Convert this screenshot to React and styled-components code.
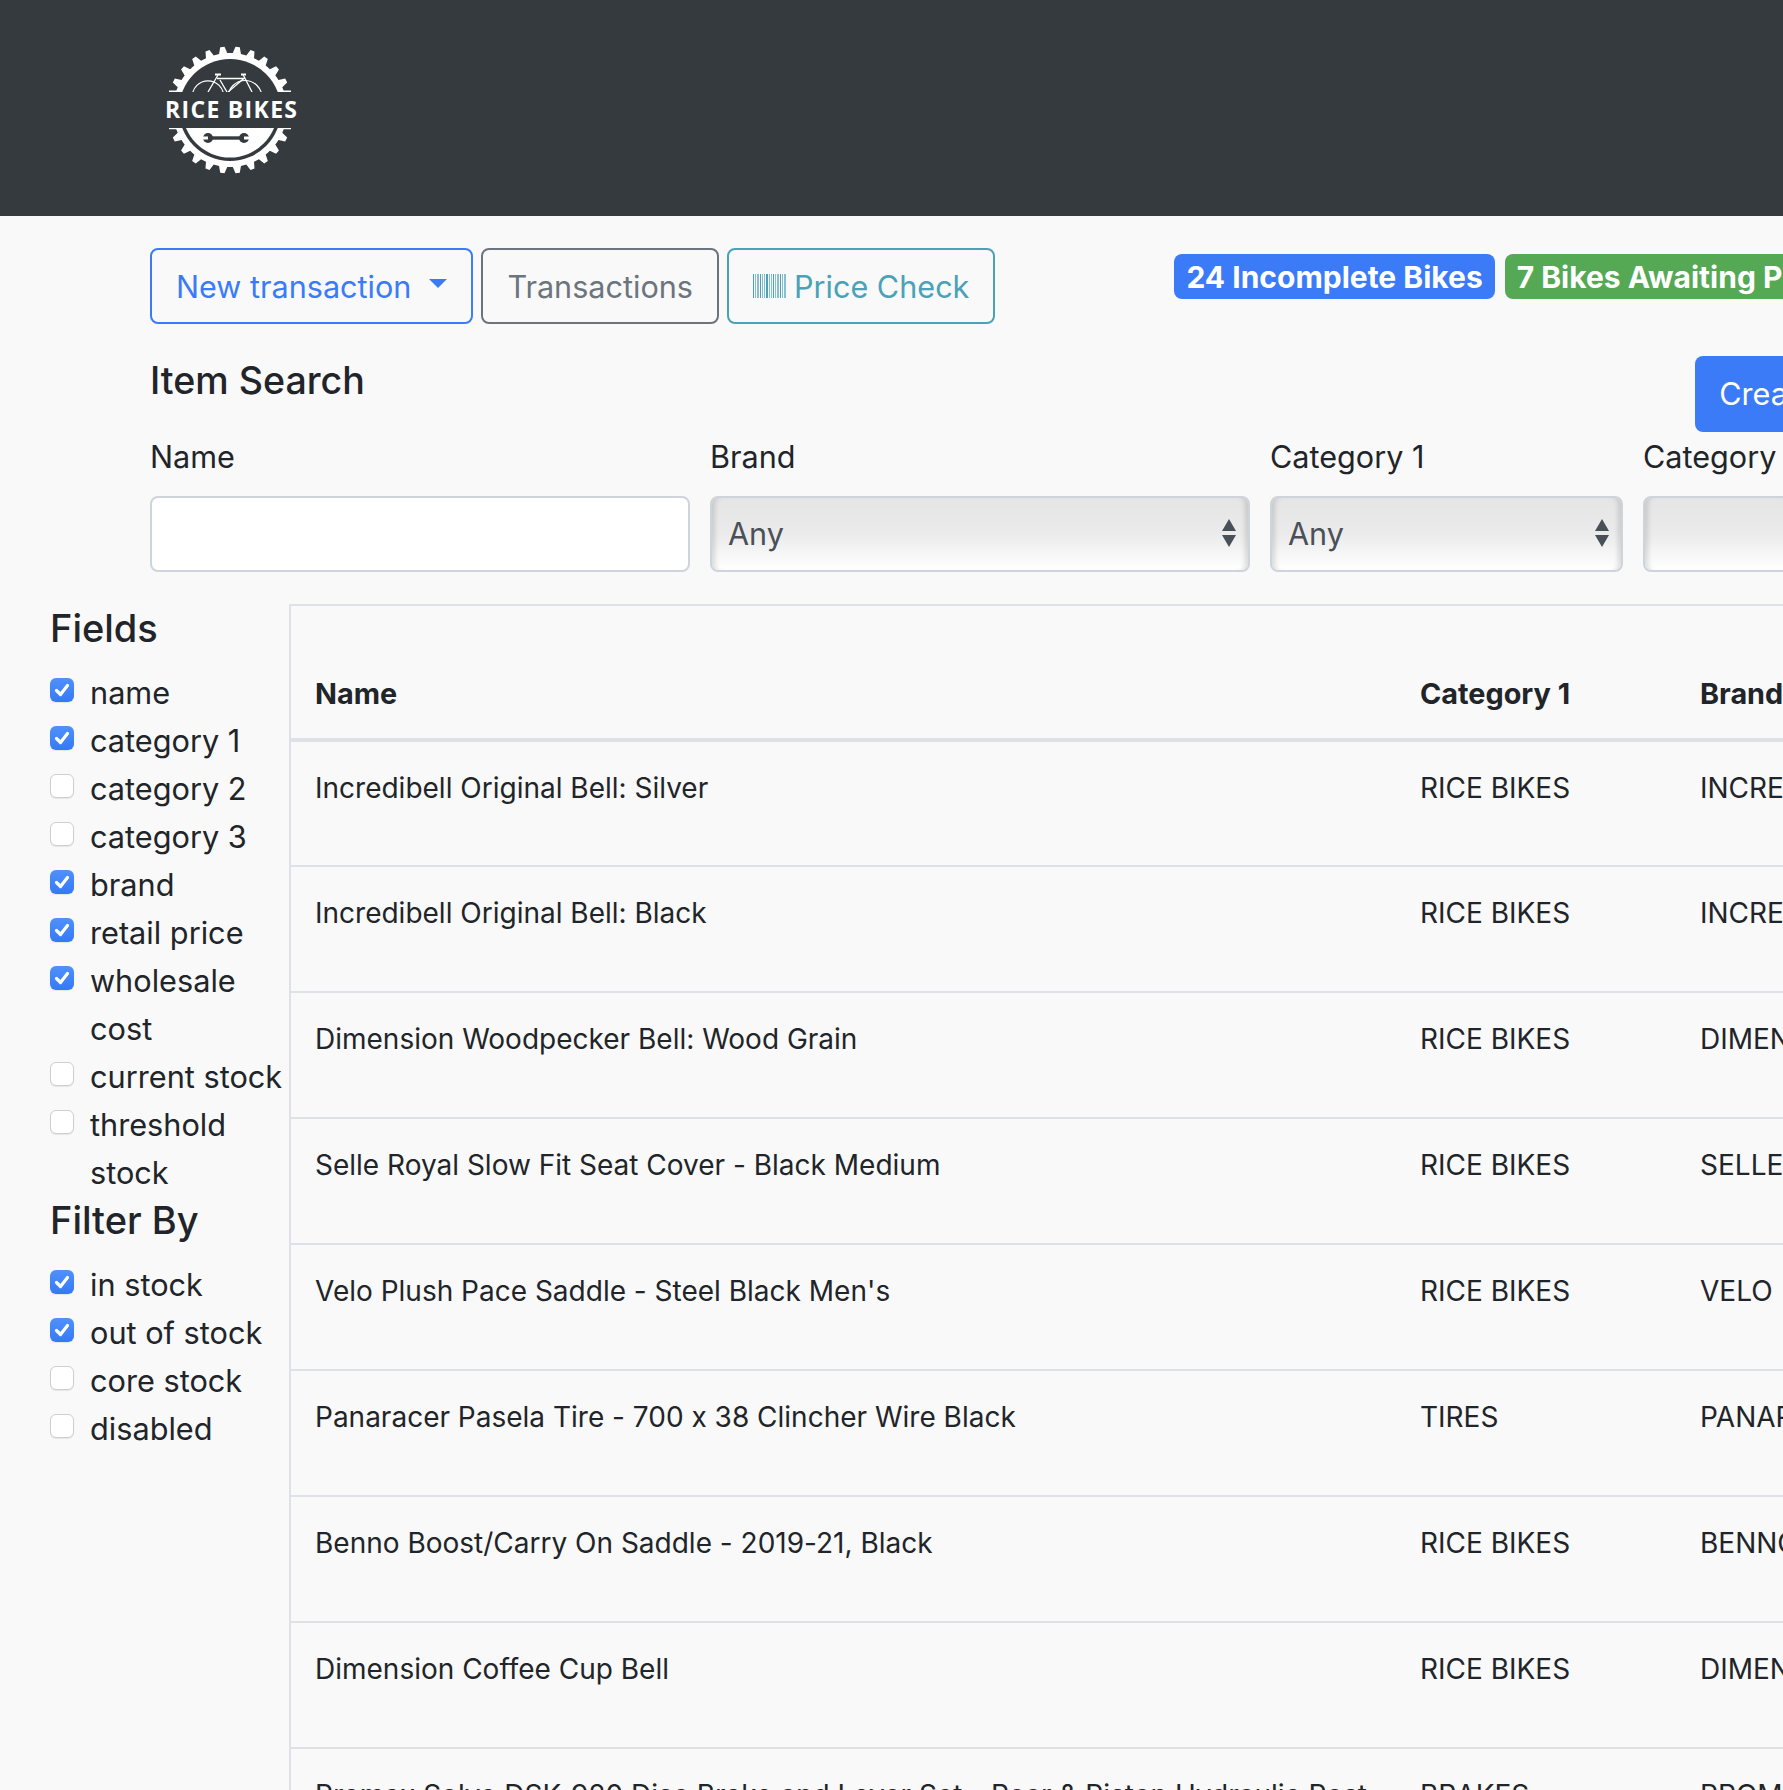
import React from 'react';
import styled, { createGlobalStyle } from 'styled-components';

const GlobalStyle = createGlobalStyle`
html, body {
    margin: 0;
    padding: 0;
    width: 1783px;
    height: 1790px;
    overflow: hidden;
    background: #f9f9f9;
}
* {
    box-sizing: border-box;
}
body {
    font-family: Inter, "Liberation Sans", sans-serif;
    font-feature-settings: "calt" 0;
    color: #212529;
}
`

const fields = [
    { label: 'name', on: true },
    { label: 'category 1', on: true },
    { label: 'category 2' },
    { label: 'category 3' },
    { label: 'brand', on: true },
    { label: 'retail price', on: true },
    { label: 'wholesale cost', on: true },
    { label: 'current stock' },
    { label: 'threshold stock' },
]

const filters = [
    { label: 'in stock', on: true },
    { label: 'out of stock', on: true },
    { label: 'core stock' },
    { label: 'disabled' },
]

const rows = [
    ['Incredibell Original Bell: Silver', 'RICE BIKES', 'INCREDIBELL'],
    ['Incredibell Original Bell: Black', 'RICE BIKES', 'INCREDIBELL'],
    ['Dimension Woodpecker Bell: Wood Grain', 'RICE BIKES', 'DIMENSION'],
    ['Selle Royal Slow Fit Seat Cover - Black Medium', 'RICE BIKES', 'SELLE ROYAL'],
    ["Velo Plush Pace Saddle - Steel Black Men's", 'RICE BIKES', 'VELO'],
    ['Panaracer Pasela Tire - 700 x 38 Clincher Wire Black', 'TIRES', 'PANARACER'],
    ['Benno Boost/Carry On Saddle - 2019-21, Black', 'RICE BIKES', 'BENNO'],
    ['Dimension Coffee Cup Bell', 'RICE BIKES', 'DIMENSION'],
    ['Promax Solve DSK-920 Disc Brake and Lever Set - Rear & Piston Hydraulic Post', 'BRAKES', 'PROMAX'],
]

// gear outline for the logo
const gearPoints = () => {
    const teeth = 26
    const pts = []
    for (let i = 0; i < teeth; i++) {
        const a = (i / teeth) * Math.PI * 2
        const step = (Math.PI * 2) / teeth
        const at = (r, t) => `${(100 + r * Math.cos(t)).toFixed(2)},${(90 + r * Math.sin(t)).toFixed(2)}`
        pts.push(at(57, a - step * 0.5), at(57, a - step * 0.3), at(63.5, a - step * 0.14), at(63.5, a + step * 0.14), at(57, a + step * 0.3))
    }
    return pts.join(' ')
}

const Logo = () => (
    <LogoSvg width="200" height="170" viewBox="0 0 200 170">
        <defs>
            <clipPath id="logoTop"><rect x="0" y="0" width="200" height="72" /></clipPath>
            <clipPath id="logoBottom"><rect x="0" y="108" width="200" height="62" /></clipPath>
        </defs>
        <g clipPath="url(#logoTop)">
            <polygon points={gearPoints()} fill="#fff" />
            <circle cx="100" cy="90" r="51" fill="#353a3e" />
            <circle cx="78" cy="76.5" r="15.7" fill="none" stroke="#fff" strokeWidth="1.2" />
            <circle cx="115" cy="77.5" r="17" fill="none" stroke="#fff" strokeWidth="1.2" />
            <path d="M88 55 L78 72 M87 58.5 L114 58.5 L98 72 M113 54.5 L122 72 M90 60 L97 72" fill="none" stroke="#fff" strokeWidth="1.3" />
            <path d="M85 54.5 L91 54.5 M111 54.5 L116 54.5" fill="none" stroke="#fff" strokeWidth="1.8" />
            <path d="M39 70.6 H52 V72 H39 Z M148 70.6 H161 V72 H148 Z" fill="#fff" />
        </g>
        <g clipPath="url(#logoBottom)">
            <polygon points={gearPoints()} fill="#fff" />
            <circle cx="100" cy="90" r="51" fill="#353a3e" />
            <circle cx="100" cy="90" r="47.5" fill="#fff" />
            <path d="M39 108 H52 V109.3 H39 Z M148 108 H161 V109.3 H148 Z" fill="#fff" />
        </g>
        <path d="M80 118 L112 118" stroke="#353a3e" strokeWidth="3.4" />
        <circle cx="78" cy="118" r="5" fill="#353a3e" />
        <circle cx="114" cy="118" r="5" fill="#353a3e" />
        <path d="M72 116.6 L78 116.6 L78 119.4 L72 119.4 Z M114 116.6 L120 116.6 L120 119.4 L114 119.4 Z" fill="#fff" />
        <LogoText x="35" y="97.5" textLength="132" lengthAdjust="spacing">RICE BIKES</LogoText>
    </LogoSvg>
)

const barWidths = [1, 1, 2, 1, 1, 1, 2, 1, 1, 1, 1, 2, 1, 1, 2, 1, 1]

const Barcode = () => {
    let x = 0
    return (
        <svg width="33" height="24" viewBox="0 0 33 24" fill="currentColor">
            {barWidths.map((w, i) => {
                const bar = <rect key={i} x={x} y="0" width={w} height="24" opacity={i % 3 === 0 ? 1 : 0.65} />
                x += w + 1
                return bar
            })}
        </svg>
    )
}

const Updown = () => (
    <svg width="16" height="28" viewBox="0 0 16 28" fill="#495057">
        <path d="M8 0 L15 12 L1 12 Z M1 16 L15 16 L8 28 Z" />
    </svg>
)

const CheckItem = ({ label, on }) => (
    <CheckRow>
        <CheckBox $on={on}>
            {on && (
                <CheckMark width="24" height="24" viewBox="0 0 24 24">
                    <path d="M6.5 12.5 L10.5 16.5 L17.5 7.5" fill="none" stroke="#fff" strokeWidth="3.2" strokeLinecap="round" strokeLinejoin="round" />
                </CheckMark>
            )}
        </CheckBox>
        <CheckLabel>{label}</CheckLabel>
    </CheckRow>
)

const App = () => {
    return (
        <Page>
            <GlobalStyle />
            <Header>
                <Logo />
            </Header>
            <Toolbar>
                <OutlineButton $color="#3b7bf8">
                    New transaction
                    <Caret />
                </OutlineButton>
                <OutlineButton $color="#6c757d">Transactions</OutlineButton>
                <OutlineButton $color="#4aa2b8">
                    <Barcode />
                    Price Check
                </OutlineButton>
                <Badges>
                    <Badge $bg="#3b7bf8">24 Incomplete Bikes</Badge>
                    <Badge $bg="#55a854">7 Bikes Awaiting Pickup</Badge>
                </Badges>
            </Toolbar>
            <SearchHead>
                <SearchTitle>Item Search</SearchTitle>
                <CreateButton>Create Item</CreateButton>
            </SearchHead>
            <SearchForm>
                <FormField>
                    <FieldLabel>Name</FieldLabel>
                    <TextInput />
                </FormField>
                <FormField>
                    <FieldLabel>Brand</FieldLabel>
                    <SelectBox>Any<Updown /></SelectBox>
                </FormField>
                <FormField>
                    <FieldLabel>Category 1</FieldLabel>
                    <SelectBox>Any<Updown /></SelectBox>
                </FormField>
                <FormField>
                    <FieldLabel>Category 2</FieldLabel>
                    <SelectBox />
                </FormField>
            </SearchForm>
            <Body>
                <Sidebar>
                    <SideTitle>Fields</SideTitle>
                    {fields.map((f) => <CheckItem key={f.label} {...f} />)}
                    <SideTitle>Filter By</SideTitle>
                    {filters.map((f) => <CheckItem key={f.label} {...f} />)}
                </Sidebar>
                <TableWrap>
                    <ItemTable>
                        <thead>
                            <tr>
                                <HeadCell $w={1105}>Name</HeadCell>
                                <HeadCell $w={280}>Category 1</HeadCell>
                                <HeadCell $w={400}>Brand</HeadCell>
                            </tr>
                        </thead>
                        <tbody>
                            {rows.map((r) => (
                                <tr key={r[0]}>
                                    {r.map((c, i) => <Cell key={i}>{c}</Cell>)}
                                </tr>
                            ))}
                        </tbody>
                    </ItemTable>
                </TableWrap>
            </Body>
        </Page>
    )
}

export default App

const Page = styled.div`
width:2400px;
background:#f9f9f9;
`

const LogoSvg = styled.svg`
display:block;
`

const LogoText = styled.text`
font-family:"Open Sans", sans-serif;
font-size:23px;
font-weight:700;
fill:#fff;
`

const Header = styled.header`
background:#353a3e;
height:216px;
padding:20px 0 0 130px;
`

const Toolbar = styled.div`
display:flex;
align-items:flex-start;
gap:8px;
padding:32px 0 0 150px;
`

const OutlineButton = styled.div`
display:flex;
align-items:center;
gap:8px;
height:76px;
padding:0 24px;
border:2px solid ${(p) => p.$color};
border-radius:8px;
color:${(p) => p.$color};
font-size:30.6px;
`

const Caret = styled.span`
width:0;
height:0;
margin:-6px 0 0 10px;
border-left:9px solid transparent;
border-right:9px solid transparent;
border-top:9px solid currentColor;
`

const Badges = styled.div`
display:flex;
gap:10px;
margin:6px 0 0 171px;
white-space:nowrap;
`

const Badge = styled.span`
height:45px;
padding:0 12px;
background:${(p) => p.$bg};
border-radius:8px;
color:#fff;
font-size:30px;
font-weight:700;
line-height:46px;
`

const SearchHead = styled.div`
display:flex;
justify-content:space-between;
margin-top:32px;
padding-left:150px;
width:1911px;
`

const SearchTitle = styled.h3`
margin:0;
padding-top:1px;
font-size:37.6px;
font-weight:500;
line-height:48px;
`

const CreateButton = styled.div`
height:76px;
padding:0 24px;
background:#3b7bf8;
border-radius:8px;
color:#fff;
font-size:30.6px;
line-height:76px;
`

const SearchForm = styled.div`
display:grid;
grid-template-columns:540px 540px 353px 352px;
column-gap:20px;
padding-left:150px;
margin-top:1px;
`

const FormField = styled.div`
display:flex;
flex-direction:column;
gap:15px;
`

const FieldLabel = styled.label`
font-size:30.6px;
line-height:48px;
`

const TextInput = styled.div`
height:76px;
background:#fff;
border:2px solid #ced4da;
border-radius:8px;
`

const SelectBox = styled.div`
display:flex;
align-items:center;
justify-content:space-between;
height:76px;
padding:0 11px 2px 16px;
border:2px solid #ced4da;
border-radius:8px;
background:linear-gradient(180deg, #e5e5e5 0%, #ebebeb 50%, #f5f5f5 75%, #ffffff 100%);
box-shadow:inset 7px 0 5px -4px rgba(0,0,0,0.13), inset -7px 0 5px -4px rgba(0,0,0,0.13);
color:#495057;
font-size:30.6px;
`

const Body = styled.div`
display:flex;
margin-top:32px;
`

const Sidebar = styled.aside`
width:289px;
flex:none;
padding-left:50px;
`

const SideTitle = styled.h4`
margin:0 0 17px;
padding-top:1px;
font-size:38px;
font-weight:500;
line-height:46px;
`

const CheckRow = styled.div`
display:flex;
align-items:flex-start;
gap:16px;
font-size:30.7px;
line-height:48px;
`

const CheckBox = styled.span`
flex:none;
width:24px;
height:24px;
margin-top:10px;
border-radius:6px;
background:${(p) => (p.$on ? 'linear-gradient(180deg, #4f92fa, #3578f6)' : '#fff')};
border:${(p) => (p.$on ? 'none' : '1px solid #cfcfcf')};
box-shadow:0 1px 1px rgba(0,0,0,0.08);
`

const CheckMark = styled.svg`
display:block;
`

const CheckLabel = styled.span`
width:198px;
padding-top:1px;
margin-bottom:-1px;
`

const TableWrap = styled.div`
flex:none;
width:1787px;
border-left:2px solid #dee2e6;
border-top:2px solid #dee2e6;
`

const ItemTable = styled.table`
width:100%;
border-collapse:collapse;
table-layout:fixed;
`

const HeadCell = styled.th`
width:${(p) => p.$w}px;
height:134px;
padding:0 24px 20px;
border-bottom:4px solid #dee2e6;
font-size:28.8px;
font-weight:700;
line-height:48px;
text-align:left;
vertical-align:bottom;
`

const Cell = styled.td`
height:126px;
padding:22px 24px 0;
border-bottom:2px solid #dee2e6;
font-size:28px;
line-height:48px;
vertical-align:top;
white-space:nowrap;
`
